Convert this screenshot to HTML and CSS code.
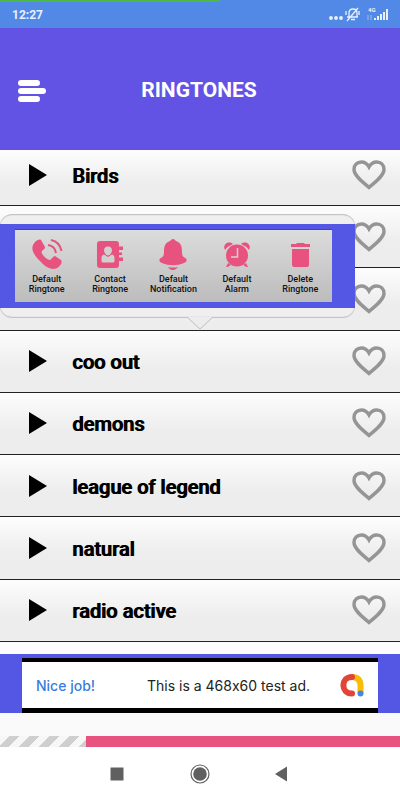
FILE: index.html
```html
<!DOCTYPE html>
<html lang="en">
<head>
<meta charset="utf-8">
<meta name="viewport" content="width=device-width, initial-scale=1">
<title>Ringtones</title>
<link rel="stylesheet" href="styles.css">
</head>
<body>
<svg class="defs" aria-hidden="true">
  <symbol id="play" viewBox="0 0 18 22"><path d="M0 0L18 11L0 22Z" fill="#000"/></symbol>
  <symbol id="heart" viewBox="0 0 34 30"><path d="M17 27.5C12 23 2 16 2 9.500C2 5 5.200 2 9.300 2C12.800 2 15.300 4 17 7C18.700 4 21.200 2 24.700 2C28.800 2 32 5 32 9.500C32 16 22 23 17 27.500Z" fill="none" stroke="#959595" stroke-width="3.400"/></symbol>
</svg>
<div class="app">
  <div class="status">
    <span class="clock">12:27</span>
    <svg class="status-icons" viewBox="0 0 64 18" aria-hidden="true">
      <g fill="#e8f1ff"><circle cx="3" cy="12" r="1.900"/><circle cx="8" cy="12" r="1.900"/><circle cx="13" cy="12" r="1.900"/>
      <path d="M46 14v-2h2v2zM49 14v-4h2v4zM52 14V8h2v6zM55 14V6h2v8zM58 14V3h2v11z"/></g>
      <g fill="none" stroke="#e8f1ff" stroke-width="1.300"><path d="M19 11h11M21 11V7q0-4 4-4t4 4v4M23 13.500h4M19 15L30 2M18 5v4M31 5v4"/><path d="M40 9v5M43 9v5" stroke-width="1" opacity=".5"/></g>
      <text x="40" y="6">4G</text>
    </svg>
  </div>
  <header class="header">
    <button class="menu" aria-label="Menu"><span></span><span></span><span></span></button>
    <h1>RINGTONES</h1>
  </header>
  <main class="list">
    <div class="row row-first"><button class="play" aria-label="Play Birds"><svg><use href="#play"/></svg></button><span class="name">Birds</span><button class="like" aria-label="Like Birds"><svg><use href="#heart"/></svg></button></div>
    <div class="row"><button class="like" aria-label="Like"><svg><use href="#heart"/></svg></button></div>
    <div class="row"><button class="like" aria-label="Like"><svg><use href="#heart"/></svg></button></div>
    <div class="row"><button class="play" aria-label="Play coo out"><svg><use href="#play"/></svg></button><span class="name">coo out</span><button class="like" aria-label="Like coo out"><svg><use href="#heart"/></svg></button></div>
    <div class="row"><button class="play" aria-label="Play demons"><svg><use href="#play"/></svg></button><span class="name">demons</span><button class="like" aria-label="Like demons"><svg><use href="#heart"/></svg></button></div>
    <div class="row"><button class="play" aria-label="Play league of legend"><svg><use href="#play"/></svg></button><span class="name">league of legend</span><button class="like" aria-label="Like league of legend"><svg><use href="#heart"/></svg></button></div>
    <div class="row"><button class="play" aria-label="Play natural"><svg><use href="#play"/></svg></button><span class="name">natural</span><button class="like" aria-label="Like natural"><svg><use href="#heart"/></svg></button></div>
    <div class="row"><button class="play" aria-label="Play radio active"><svg><use href="#play"/></svg></button><span class="name">radio active</span><button class="like" aria-label="Like radio active"><svg><use href="#heart"/></svg></button></div>
    <div class="row-next"></div>
    <div class="popup">
      <div class="band">
        <div class="actions">
          <button><svg viewBox="0 0 32 32"><path d="M2 7C4 3 8 .500 10 2L14 9C14.500 11 11 12 10.500 14C11 17 16 22 19 22C21 21 22 18 24 18L30 22C32 24 29 29 25 30.500C20 32 14 29 9 23C3 17 0 12 2 7Z"/><path d="M17 7q7 1 8 8M20 2q9 2 10.500 11" class="line"/></svg><span>Default<br>Ringtone</span></button>
          <button><svg viewBox="0 0 32 32"><path d="M6 3H22Q25 3 25 6V8.500H29V12H25V14.500H28V17H25V19.500H29V23H25V27Q25 30 22 30H6Q3 30 3 27V6Q3 3 6 3Z"/><path fill="#d0d0d0" d="M14 8.500C10 8.500 9.500 12 10.500 14.500Q11.500 17 14 17.500Q16.500 17 17.500 14.500C18.500 12 18 8.500 14 8.500ZM10 16.500Q7.500 17 7.500 20V23Q7.500 24.500 9 24.500H19Q20.500 24.500 20.500 23V20Q20.500 17 18 16.500L14 19Z"/></svg><span>Contact<br>Ringtone</span></button>
          <button><svg viewBox="0 0 32 32"><path d="M13 3Q16-1 19 3C24 5 25 8 25 14C25 18 26 19 29 20.500Q31 24 27 25C20 28 12 28 5 25Q1 24 3 20.500C6 19 7 18 7 14C7 8 8 5 13 3ZM11 29Q16 30 21 29Q18 32.500 16 32Q13 32.500 11 29Z"/></svg><span>Default<br>Notification</span></button>
          <button><svg viewBox="0 0 32 32"><path d="M4 12C1 7 7 2 12 6Q7 8 4 12ZM28 12C31 7 25 2 20 6Q25 8 28 12ZM7 25L5 29H6.500L10 27ZM25 25L27 29H25.500L22 27Z"/><circle cx="16" cy="17.500" r="11"/><path d="M16.500 10V19H10" fill="none" stroke="#d3d3d3" stroke-width="1.500"/></svg><span>Default<br>Alarm</span></button>
          <button><svg viewBox="0 0 32 32"><path d="M7 6H12L13 5H20L21 6H26V9H7ZM8 11H25V27Q25 29 23 29H10Q8 29 8 27Z"/></svg><span>Delete<br>Ringtone</span></button>
        </div>
      </div>
      <svg class="pointer" viewBox="0 0 26 13" aria-hidden="true"><path d="M0 0L13 12L26 0" fill="#ececec" stroke="#bdbdbd"/></svg>
    </div>
  </main>
  <aside class="ad">
    <a class="ad-box" href="#">
      <span class="nice">Nice job!</span>
      <span class="ad-text">This is a 468x60 test ad.</span>
      <svg class="admob" viewBox="0 0 24 24" aria-hidden="true"><g fill="none" stroke-width="6"><path d="M12 4Q20.500 4 20.500 13V20" stroke="#fbbc04"/><path d="M12 20.500C.500 20.500 .500 4 12 4" stroke="#e24438" stroke-linecap="round"/></g><circle cx="20.500" cy="20.500" r="3" fill="#4487e0"/></svg>
    </a>
  </aside>
  <div class="progress"><div class="stripes"></div><div class="pink"></div></div>
  <nav class="nav">
    <button aria-label="Recent apps"><svg viewBox="0 0 20 20"><path d="M3.500 3.500H16.500V16.500H3.500Z"/></svg></button>
    <button aria-label="Home"><svg viewBox="0 0 20 20"><circle cx="10" cy="10" r="9" fill="none" stroke="#606060" stroke-width="1.200"/><circle cx="10" cy="10" r="6.800"/></svg></button>
    <button aria-label="Back"><svg viewBox="0 0 20 20"><path d="M2 10L14 2.500V17.500Z"/></svg></button>
  </nav>
</div>
</body>
</html>
```
FILE: styles.css
```css
* { box-sizing: border-box; }
body { margin: 0; font-family: Roboto, "Liberation Sans", sans-serif; background: #fafafa; }
button { border: 0; padding: 0; background: none; font: inherit; color: inherit; }
.defs { position: absolute; width: 0; height: 0; }
.app { display: flex; flex-direction: column; min-height: 100vh; }

.status {
  height: 28px;
  padding: 2px 8px 0 12px;
  display: flex;
  align-items: center;
  justify-content: space-between;
  background: linear-gradient(#4db848, #4db848) 0 0 / 55% 2px no-repeat, #5289e6;
}
.clock { font-size: 12px; line-height: 14px; font-weight: 700; color: #e8f1ff; }
.status-icons { width: 64px; height: 18px; }
.status-icons text { font-size: 6px; font-weight: 700; fill: #e8f1ff; }

.header {
  height: 122px;
  padding: 2px 20px 0 18px;
  display: grid;
  grid-template-columns: 28px 1fr 28px;
  align-items: center;
  background: #6353e5;
  color: #fff;
}
.header h1 { margin: 0; font-size: 21px; line-height: 24px; font-weight: 700; text-align: center; }
.menu { display: flex; flex-direction: column; gap: 2px; padding-top: 1px; }
.menu span { width: 22px; height: 6px; border-radius: 3px; background: #fff; }
.menu span:nth-child(2) { width: 28px; }

.list { position: relative; flex: 1; display: flex; flex-direction: column; }
.row {
  flex: 1 0 62px;
  display: flex;
  align-items: center;
  padding: 0 14px 0 29px;
  border-bottom: 1px solid #222;
  background: linear-gradient(#fdfdfd, #ededed 60%, #ededed);
}
.row-first { flex: 0 0 56px; padding-bottom: 6px; }
.row-next { flex: 0 0 12px; background: #fcfcfc; }
.play svg { display: block; width: 18px; height: 22px; }
.name { margin-left: 25px; padding-top: 2px; font-size: 20px; line-height: 24px; font-weight: 500; color: #000; text-shadow: 1px 0 0 #000; }
.like { margin-left: auto; }
.like svg { display: block; width: 34px; height: 30px; }

.popup {
  position: absolute;
  top: 64px;
  left: 0;
  right: 45px;
  padding: 9px 0;
  border: 1px solid #c4c4c4;
  border-width: 1px 0;
  border-radius: 12px;
  background: #efefef;
  box-shadow: inset 0 0 1px #999;
}
.band { padding: 6px 23px 6px 15px; background: #5456e4; }
.actions {
  display: grid;
  grid-template-columns: repeat(5, 1fr);
  padding: 8px 0;
  background: linear-gradient(#dcdcdc, #bcbcbc);
  box-shadow: 0 -1px 0 #4643a8;
}
.actions button { display: flex; flex-direction: column; align-items: center; gap: 4px; font-size: 9px; line-height: 10px; font-weight: 500; color: #111; }
.actions svg { width: 32px; height: 32px; fill: #e8527f; }
.actions .line { fill: none; stroke: #e8527f; stroke-width: 2; }
.pointer { position: absolute; top: 102px; left: 187px; width: 26px; height: 13px; }

.ad { padding: 4px 22px 0; background: #5456e4; }
.ad-box {
  display: flex;
  align-items: center;
  height: 55px;
  padding: 0 14px;
  border: solid #000;
  border-width: 4px 0 5px;
  background: #fff;
  text-decoration: none;
  font-family: Inter, Roboto, sans-serif;
  font-variant-ligatures: no-contextual;
  font-size: 14px;
  color: #222;
}
.nice { color: #3c7ddb; flex: 0 0 111px; font-weight: 500; }
.ad-text { white-space: nowrap; }
.admob { width: 24px; height: 24px; margin-left: auto; }

.progress { display: flex; height: 11px; margin-top: 23px; }
.stripes { width: 86px; background: repeating-linear-gradient(135deg, #f7f7f7 0 7px, #cfcfcf 7px 14px); }
.pink { flex: 1; background: #e8527f; }
.nav { height: 53px; padding: 0 76px; display: grid; grid-template-columns: repeat(3, 1fr); place-items: center; background: #fff; }
.nav svg { display: block; width: 20px; height: 20px; fill: #606060; }
```
